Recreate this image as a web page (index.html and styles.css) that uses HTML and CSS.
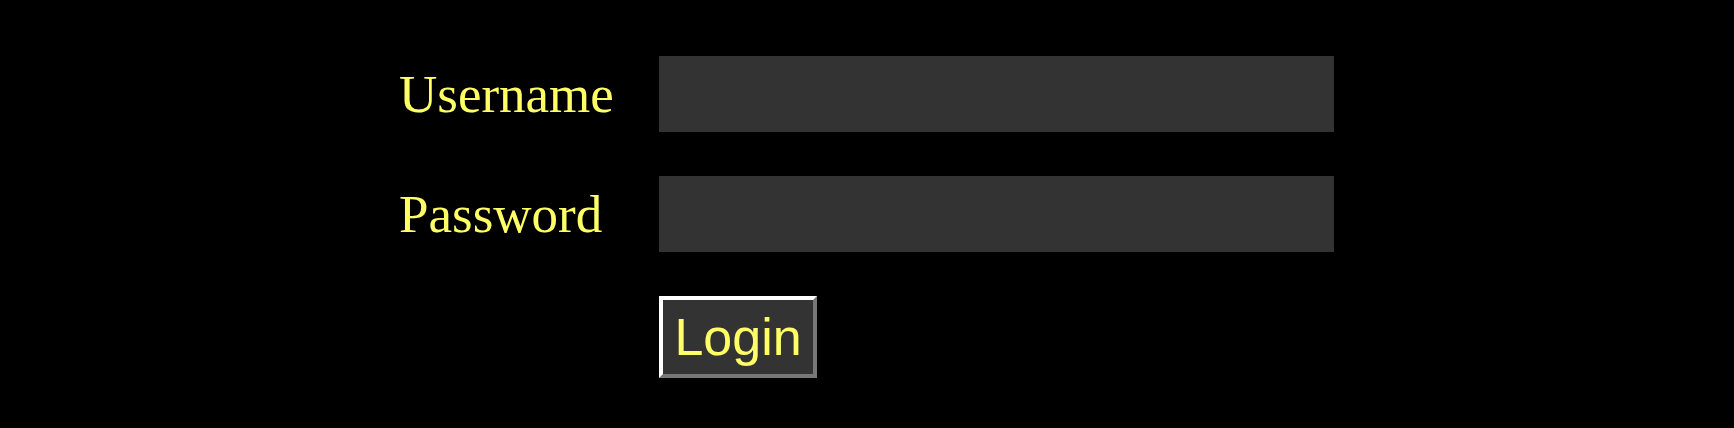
FILE: index.html
```html
<!DOCTYPE html>
<html>
<head>
<meta charset="utf-8">
<link rel="stylesheet" href="styles.css">
</head>
<body>
<form class="login">
  <label class="label" for="u">Username</label>
  <input class="field" id="u" type="text">
  <label class="label" for="p">Password</label>
  <input class="field" id="p" type="password">
  <span></span>
  <div class="actions"><button class="btn" type="button">Login</button></div>
</form>
</body>
</html>
```
FILE: styles.css
```css
html, body {
  margin: 0;
  background: #000;
}
body {
  padding-top: 56px;
}
.login {
  display: grid;
  grid-template-columns: 260px 675px;
  grid-auto-rows: auto;
  row-gap: 44px;
  justify-content: center;
  align-items: center;
  margin-left: -1px;
}
.label {
  font-family: "Liberation Serif", "Times New Roman", serif;
  font-size: 53px;
  color: #ffff66;
  line-height: normal;
}
.field {
  box-sizing: border-box;
  height: 76px;
  width: 675px;
  background: #333;
  border: none;
  margin: 0;
  padding: 0 12px;
  color: #ffff66;
  font-size: 40px;
  outline: none;
}
.actions {
  display: flex;
}
.btn {
  box-sizing: border-box;
  height: 82px;
  width: 158px;
  padding: 0;
  margin: 0;
  background: #333;
  color: #ffff66;
  font-family: "Liberation Sans", Arial, sans-serif;
  font-size: 52px;
  border: 4px solid;
  border-color: #fff #777 #777 #fff;
  cursor: pointer;
}
```
